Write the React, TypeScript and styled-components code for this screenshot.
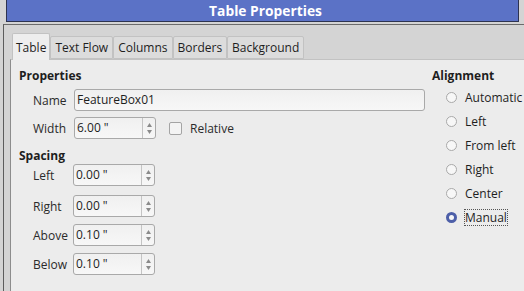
import React from "react";
import styled, { createGlobalStyle } from "styled-components";

const Global = createGlobalStyle`
  html, body { margin: 0; padding: 0; overflow: hidden; }
  body { background: #d4d4d4; font-family: "Open Sans", "Noto Sans", sans-serif; }
`;

const Screen = styled.div`
  width: 524px;
  height: 291px;
  background: #d4d4d4;
  display: flex;
  flex-direction: column;
  overflow: hidden;
`;

const TitleBar = styled.div`
  margin: 0 5px 0 6px;
  height: 21px;
  background: #5b72c6;
  border: 1px solid #2d3350;
  border-top: none;
  color: #fff;
  font-weight: 700;
  font-size: 13.8px;
  line-height: 21px;
  text-align: center;
  padding-left: 6px;
`;

const Frame = styled.div`
  flex: 1;
  margin: 2px 0 0 3px;
  border-left: 1px solid #5d5d5d;
  border-top: 1px solid #6b6b6b;
  padding: 8px 0 0 6px;
  display: flex;
  flex-direction: column;
`;

const TabBar = styled.div`
  display: flex;
  align-items: flex-end;
  padding-left: 2px;
  height: 26px;
`;

const Tab = styled.div<{ $active?: boolean }>`
  height: ${({ $active }) => ($active ? "27px" : "23px")};
  margin-bottom: ${({ $active }) => ($active ? "-1px" : "0")};
  padding: 0 ${({ $active }) => ($active ? "3px" : "4px")};
  box-sizing: border-box;
  background: ${({ $active }) => ($active ? "#eeeeee" : "#dcdcdc")};
  border: 1px solid #c2c2c2;
  border-bottom: ${({ $active }) => ($active ? "none" : "1px solid #c2c2c2")};
  border-radius: 2px 2px 0 0;
  font-size: 12px;
  color: #1e1e1e;
  display: flex;
  align-items: center;
  z-index: ${({ $active }) => ($active ? 1 : 0)};
`;

const Panel = styled.div`
  flex: 1;
  background: #ececec;
  border-left: 1px solid #8c8c8c;
  border-top: 1px solid #c2c2c2;
  display: flex;
  padding: 8px 0 0 8px;
`;

const LeftCol = styled.div`
  width: 413px;
  display: flex;
  flex-direction: column;
`;

const RightCol = styled.div`
  display: flex;
  flex-direction: column;
`;

const Heading = styled.div<{ $top?: number }>`
  font-weight: 700;
  font-size: 12px;
  color: #1e1e1e;
  height: 15px;
  line-height: 15px;
  margin-top: ${({ $top }) => $top ?? 0}px;
`;

const Row = styled.div<{ $top: number }>`
  display: flex;
  align-items: center;
  margin-top: ${({ $top }) => $top}px;
  padding-left: 14px;
`;

const Label = styled.div<{ $w: number }>`
  width: ${({ $w }) => $w}px;
  font-size: 12px;
  color: #2a2a2a;
`;

const TextInput = styled.div`
  width: 351px;
  height: 22px;
  box-sizing: border-box;
  border: 1px solid #a9a9a9;
  border-radius: 3px;
  background: linear-gradient(#f0f0f0, #f7f7f7);
  font-size: 12px;
  color: #1e1e1e;
  padding-left: 2px;
  line-height: 20px;
`;

const Spin = styled.div`
  width: 82px;
  height: 22px;
  box-sizing: border-box;
  border: 1px solid #a9a9a9;
  border-radius: 3px;
  background: linear-gradient(#f0f0f0, #f7f7f7);
  display: flex;
`;

const SpinValue = styled.div`
  flex: 1;
  font-size: 12px;
  color: #1e1e1e;
  padding-left: 2px;
  line-height: 20px;
`;

const SpinButtons = styled.div`
  width: 12px;
  border-left: 1px solid #c4c4c4;
  display: flex;
  flex-direction: column;
  align-items: center;
  justify-content: center;
  gap: 3px;
`;

const Checkbox = styled.div`
  width: 11px;
  height: 11px;
  border: 1px solid #a4a4a4;
  border-radius: 2px;
  background: #f4f4f4;
  margin: 0 8px 0 13px;
`;

const Radio = styled.div<{ $on?: boolean }>`
  width: 11px;
  height: 11px;
  box-sizing: border-box;
  border-radius: 50%;
  border: ${({ $on }) => ($on ? "3px solid #4d5fa8" : "1px solid #a9a9a9")};
  background: #f7f7f7;
  margin-right: 8px;
`;

const RadioList = styled.div`
  margin-top: 2px;
`;

const RadioRow = styled.div`
  display: flex;
  align-items: center;
  height: 24px;
  padding-left: 14px;
`;

const RadioLabel = styled.div<{ $focus?: boolean }>`
  font-size: 12px;
  color: #1e1e1e;
  line-height: 15px;
  outline: ${({ $focus }) => ($focus ? "1px dotted #555" : "none")};
`;

const Arrows = () => (
  <SpinButtons>
    <svg width="5" height="4" viewBox="0 0 5 4">
      <path d="M2.5 0 L5 4 L0 4 Z" fill="#8a8a8a" />
    </svg>
    <svg width="5" height="4" viewBox="0 0 5 4">
      <path d="M0 0 L5 0 L2.5 4 Z" fill="#8a8a8a" />
    </svg>
  </SpinButtons>
);

const SpinField = ({ value }: { value: string }) => (
  <Spin>
    <SpinValue>{value}</SpinValue>
    <Arrows />
  </Spin>
);

const tabs = ["Table", "Text Flow", "Columns", "Borders", "Background"];
const spacing: [string, string, number][] = [
  ["Left", "0.00 \"", 1],
  ["Right", "0.00 \"", 9],
  ["Above", "0.10 \"", 7],
  ["Below", "0.10 \"", 7],
];
const alignments = ["Automatic", "Left", "From left", "Right", "Center", "Manual"];

const App = () => (
  <>
    <Global />
    <Screen>
      <TitleBar>Table Properties</TitleBar>
      <Frame>
        <TabBar>
          {tabs.map((t, i) => (
            <Tab key={t} $active={i === 0}>
              {t}
            </Tab>
          ))}
        </TabBar>
        <Panel>
          <LeftCol>
            <Heading>Properties</Heading>
            <Row $top={6}>
              <Label $w={41}>Name</Label>
              <TextInput>FeatureBox01</TextInput>
            </Row>
            <Row $top={6}>
              <Label $w={41}>Width</Label>
              <SpinField value={'6.00 "'} />
              <Checkbox />
              <Label $w={60}>Relative</Label>
            </Row>
            <Heading $top={9}>Spacing</Heading>
            {spacing.map(([l, v, top]) => (
              <Row key={l} $top={top}>
                <Label $w={40}>{l}</Label>
                <SpinField value={v} />
              </Row>
            ))}
          </LeftCol>
          <RightCol>
            <Heading>Alignment</Heading>
            <RadioList>
              {alignments.map((a) => (
                <RadioRow key={a}>
                  <Radio $on={a === "Manual"} />
                  <RadioLabel $focus={a === "Manual"}>{a}</RadioLabel>
                </RadioRow>
              ))}
            </RadioList>
          </RightCol>
        </Panel>
      </Frame>
    </Screen>
  </>
);

export default App;
